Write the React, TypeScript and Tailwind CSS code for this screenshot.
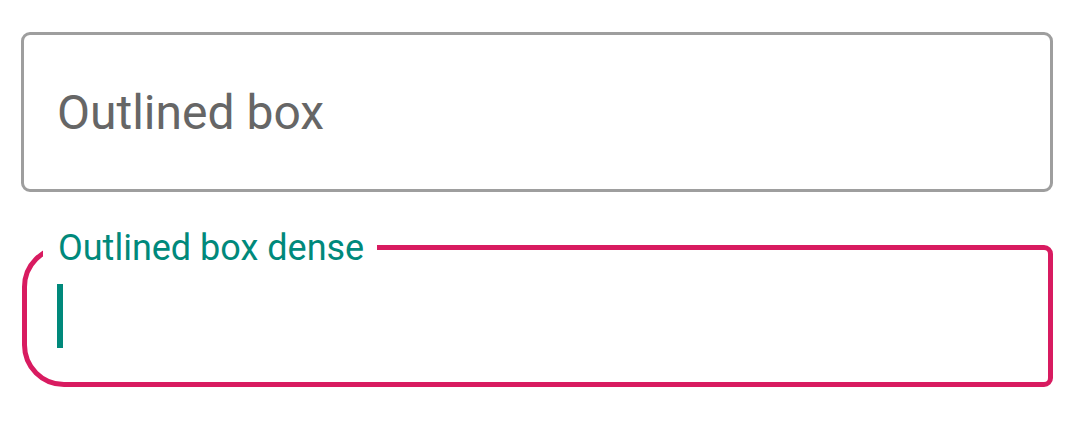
import React from "react";

const App = () => {
    return <div className="w-[1071px] h-[424px] bg-white pt-[32px] pl-[21px] font-['Roboto',sans-serif]">
        <div className="w-[1032px] h-[160px] border-[3px] border-[#9e9e9e] rounded-[9px] flex items-center pl-[33px]">
            <span className="text-[48px] leading-none text-[#666666] pt-[2px]">Outlined box</span>
        </div>
        <div className="relative mt-[53px] ml-[1px] w-[1031px] h-[142px] border-[5px] border-[#d81b60] rounded-tl-[42px] rounded-bl-[42px] rounded-tr-[9px] rounded-br-[9px]">
            <span className="absolute left-[16px] top-[-21px] bg-white pl-[15px] pr-[13px] text-[36px] leading-[38px] text-[#00897b]">Outlined box dense</span>
            <div className="absolute left-[30px] top-[34px] w-[6px] h-[64px] bg-[#00897b]" />
        </div>
    </div>
}

export default App;
